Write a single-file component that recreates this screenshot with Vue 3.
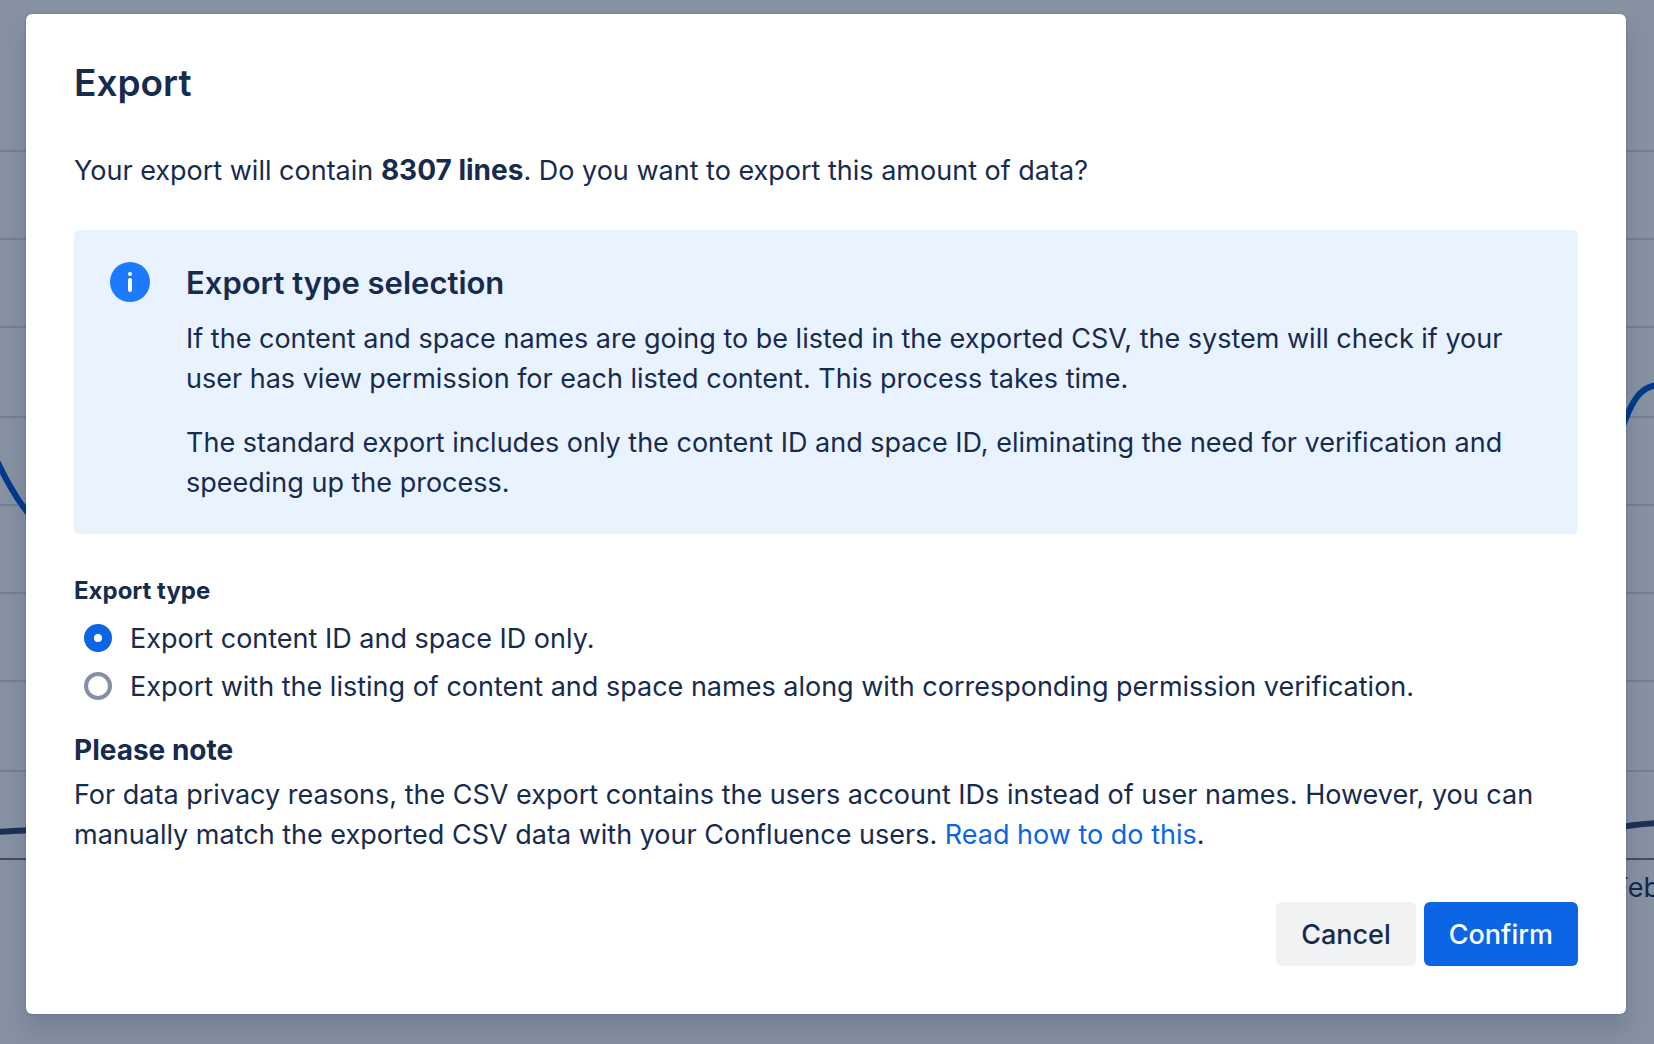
<script setup>
import { ref } from 'vue'

const exportType = ref('ids')
const options = [
  { value: 'ids', label: 'Export content ID and space ID only.' },
  {
    value: 'names',
    label: 'Export with the listing of content and space names along with corresponding permission verification.',
  },
]
const gridLines = [151, 239, 327, 417, 505, 593, 681, 771]
</script>

<template>
  <div class="page">
    <!-- Dimmed chart behind the dialog -->
    <svg class="chart" viewBox="0 0 1654 1044" aria-hidden="true">
      <line v-for="y in gridLines" :key="y" class="grid" x1="0" :y1="y" x2="1654" :y2="y" />
      <line class="axis" x1="0" y1="859" x2="1654" y2="859" />
      <path class="views" d="M-12 442C-4 459 2 472 10 486C16 497 22 506 32 518" />
      <path class="views" d="M1618 438C1624 424 1627 414 1632 405C1639 391 1648 385 1660 385" />
      <path class="users" d="M-6 832L14 831L34 830" />
      <path class="users" d="M1616 828C1630 825 1642 824 1660 823" />
      <text class="tick" x="1613" y="897">Feb</text>
    </svg>

    <section class="dialog" role="dialog" aria-modal="true" aria-labelledby="dialog-title">
      <h1 id="dialog-title" class="title">Export</h1>
      <p class="intro">
        Your export will contain <strong>8307 lines</strong>. Do you want to export this amount of data?
      </p>

      <div class="panel">
        <svg class="info" viewBox="0 0 40 40" aria-hidden="true">
          <circle cx="20" cy="20" r="20" fill="#1d7afc" />
          <circle cx="20" cy="12" r="2" fill="#fff" />
          <rect x="18" y="16" width="4" height="14" rx="2" fill="#fff" />
        </svg>
        <div class="panel-body">
          <h2 class="panel-title">Export type selection</h2>
          <p>
            If the content and space names are going to be listed in the exported CSV, the system will check if your
            user has view permission for each listed content. This process takes time.
          </p>
          <p>
            The standard export includes only the content ID and space ID, eliminating the need for verification and
            speeding up the process.
          </p>
        </div>
      </div>

      <fieldset class="choices">
        <legend>Export type</legend>
        <label v-for="option in options" :key="option.value" class="choice">
          <input v-model="exportType" type="radio" name="export-type" :value="option.value" />
          <span>{{ option.label }}</span>
        </label>
      </fieldset>

      <h3 class="note-title">Please note</h3>
      <p class="note">
        For data privacy reasons, the CSV export contains the users account IDs instead of user names. However, you can
        manually match the exported CSV data with your Confluence users. <a href="#">Read how to do this</a>.
      </p>

      <footer class="actions">
        <button type="button" class="button">Cancel</button>
        <button type="button" class="button primary">Confirm</button>
      </footer>
    </section>
  </div>
</template>

<style>
body {
  background: #8691a2;
}
</style>

<style scoped>
.page {
  position: relative;
  box-sizing: border-box;
  min-height: 100vh;
  padding: 14px 28px 30px 26px;
  overflow: hidden;
  background: #8691a2;
  color: #172b4d;
  font-family: Inter, "Liberation Sans", sans-serif;
  font-size: 27px;
  line-height: 40px;
}

.chart {
  position: absolute;
  top: 0;
  left: 0;
  width: 100%;
}

.grid {
  stroke: #738094;
  stroke-width: 2;
}

.axis {
  stroke: #404d68;
  stroke-width: 2;
}

.views,
.users {
  fill: none;
  stroke-width: 6;
}

.views {
  stroke: #003a8c;
}

.users {
  stroke: #1c3155;
}

.tick {
  fill: #12284f;
  font-size: 27px;
}

.dialog {
  position: relative;
  box-sizing: border-box;
  padding: 45px 48px 48px;
  border-radius: 6px;
  background: #fff;
  box-shadow: 0 0 2px rgba(9, 30, 66, 0.31), 0 16px 24px rgba(9, 30, 66, 0.15);
}

h1,
h2,
h3,
p {
  margin: 0;
}

.title {
  font-size: 37px;
  font-weight: 600;
  line-height: 48px;
}

.intro {
  margin-top: 44px;
}

strong {
  font-size: 28px;
  font-weight: 700;
  line-height: 1;
}

.panel {
  display: flex;
  gap: 36px;
  margin-top: 39px;
  padding: 32px 36px 31px;
  border-radius: 6px;
  background: #e9f2ff;
}

.info {
  flex: none;
  width: 40px;
  height: 40px;
}

.panel-body {
  flex: 1;
  padding-top: 1px;
}

.panel-title {
  margin-bottom: 16px;
  font-size: 31px;
  font-weight: 600;
  line-height: 40px;
}

.panel-body p + p {
  margin-top: 24px;
}

.choices {
  margin: 41px 0 0;
  padding: 0;
  border: 0;
}

legend {
  margin-bottom: 7px;
  padding: 0;
  font-size: 24px;
  font-weight: 700;
  line-height: 32px;
}

.choice {
  display: flex;
  align-items: center;
  gap: 18px;
  min-height: 48px;
  padding-left: 10px;
}

.choice span {
  padding-top: 2px;
}

.choice input {
  flex: none;
  width: 28px;
  height: 28px;
  margin: 0;
  appearance: none;
  border: 4px solid #8590a2;
  border-radius: 50%;
  background: #fff;
}

.choice input:checked {
  border: 10px solid #0c66e4;
}

.note-title {
  margin-top: 20px;
  font-size: 28px;
  font-weight: 700;
  line-height: 40px;
}

.note {
  margin-top: 5px;
}

a {
  color: #0c66e4;
  text-decoration: none;
}

.actions {
  display: flex;
  justify-content: flex-end;
  gap: 8px;
  margin-top: 47px;
}

.button {
  height: 64px;
  padding: 2px 25px 0;
  border: 0;
  border-radius: 6px;
  background: #f1f2f4;
  color: #172b4d;
  font: 500 27px/40px Inter, "Liberation Sans", sans-serif;
}

.primary {
  background: #0c66e4;
  color: #fff;
}
</style>
